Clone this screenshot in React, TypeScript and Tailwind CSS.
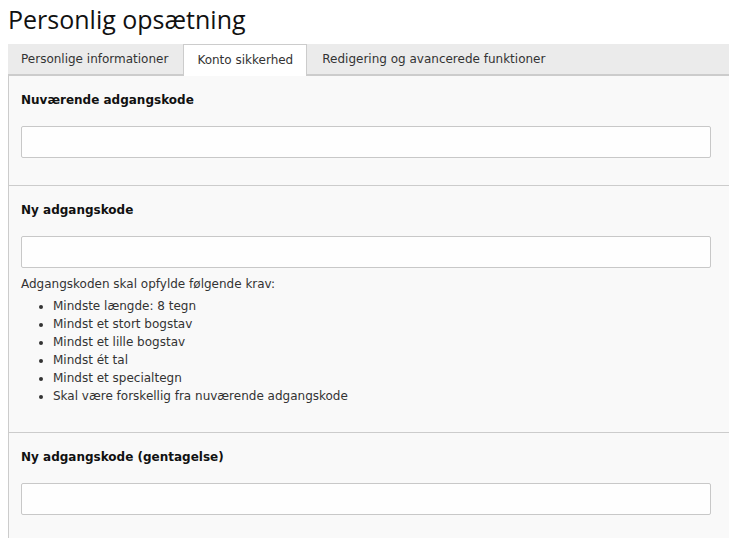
import React from 'react'

const RULES = [
  'Mindste længde: 8 tegn',
  'Mindst et stort bogstav',
  'Mindst et lille bogstav',
  'Mindst ét tal',
  'Mindst et specialtegn',
  'Skal være forskellig fra nuværende adgangskode',
]

function Field({ label, children, last }: { label: string; children?: React.ReactNode; last?: boolean }) {
  return (
    <div className={`pl-[12px] pr-[18px] pt-[15px] pb-[27px] ${last ? '' : 'border-b border-[#cccccc]'}`}>
      <label className="block font-bold text-[#111] leading-[18px]">{label}</label>
      <input
        type="password"
        className="mt-[17px] block w-full h-[32px] bg-[#fefefe] border border-[#c8c8c8] rounded-[2px] outline-none px-2"
      />
      {children}
    </div>
  )
}

export default function App() {
  return (
    <div className="min-h-screen bg-white font-['DejaVu_Sans',sans-serif] text-[12px] text-[#333] overflow-hidden">
      <h1 className="pl-2 pt-[2px] h-[44px] font-['Open_Sans',sans-serif] text-[25px] leading-[34px] text-[#111]">
        Personlig opsætning
      </h1>

      <div className="ml-2">
        <div className="flex h-[32px] bg-[#ebebeb] border-b-2 border-[#cccccc]">
          <div className="pl-[13px] pr-[15px] leading-[30px]">Personlige informationer</div>
          <div className="px-[13px] leading-[30px] bg-white border border-b-0 border-[#cccccc] h-[32px] -mb-[2px]">Konto sikkerhed</div>
          <div className="px-[15px] leading-[30px]">Redigering og avancerede funktioner</div>
        </div>

        <div className="border-l border-[#cccccc] bg-[#f9f9f9]">
          <Field label="Nuværende adgangskode" />
          <Field label="Ny adgangskode">
            <p className="mt-[7px] leading-[18px]">Adgangskoden skal opfylde følgende krav:</p>
            <ul className="list-disc pl-[32px] leading-[18px] mt-[4px]">
              {RULES.map(r => <li key={r}>{r}</li>)}
            </ul>
          </Field>
          <Field label="Ny adgangskode (gentagelse)" last />
        </div>
      </div>
    </div>
  )
}
